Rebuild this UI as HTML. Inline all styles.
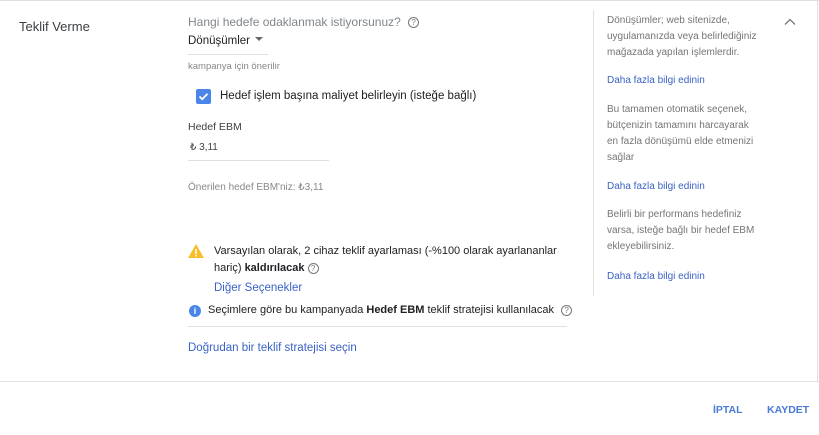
<!DOCTYPE html>
<html><head><meta charset="utf-8"><style>
body{margin:0;width:819px;height:435px;background:#fff;font-family:"Liberation Sans",Arial,sans-serif;position:relative;overflow:hidden;color:#202124}
.a{position:absolute;white-space:nowrap}
.g{color:#5f6368}
.l{color:#3b62c4}
.s{font-size:10px;color:#757575;line-height:16px}
.q{display:inline-block;width:9px;height:9px;border:1px solid #777;border-radius:50%;font-size:8px;line-height:9px;text-align:center;color:#777}
</style></head><body>
<div class="a" style="left:0;top:0;width:819px;height:1px;background:#e0e0e0"></div>
<div class="a" style="left:817px;top:0;width:1px;height:382px;background:#e0e0e0"></div>
<div class="a" style="left:19px;top:19px;font-size:13px;color:#3c4043">Teklif Verme</div>
<div class="a" style="left:188px;top:15px;font-size:12px;color:#80868b">Hangi hedefe odaklanmak istiyorsunuz? <span class="q" style="margin-left:4px;vertical-align:1px">?</span></div>
<div class="a" style="left:188px;top:35px;font-size:11.5px">Dönüşümler <span style="display:inline-block;border:4px solid transparent;border-top:4px solid #666;vertical-align:-1px;margin-left:2px"></span></div>
<div class="a" style="left:188px;top:54px;width:80px;height:1px;background:#e0e0e0"></div>
<div class="a" style="left:188px;top:61px;font-size:9.5px;color:#888">kampanya için önerilir</div>
<div class="a" style="left:196px;top:89px;width:15px;height:15px;background:#4a86e8;border-radius:2px"><svg width="15" height="15"><path d="M3.5 7.5l2.7 2.7 5.3-5.5" stroke="#fff" stroke-width="1.8" fill="none"/></svg></div>
<div class="a" style="left:220px;top:90px;font-size:11.5px">Hedef işlem başına maliyet belirleyin (isteğe bağlı)</div>
<div class="a" style="left:188px;top:121px;font-size:10.5px;color:#3c4043">Hedef EBM</div>
<div class="a" style="left:190px;top:142px;font-size:10px;color:#444">₺ 3,11</div>
<div class="a" style="left:188px;top:160px;width:141px;height:1px;background:#e0e0e0"></div>
<div class="a" style="left:188px;top:182px;font-size:10px;color:#888">Önerilen hedef EBM'niz: ₺3,11</div>
<svg class="a" style="left:187px;top:243px" width="18" height="16"><path d="M9 1L17 15H1z" fill="#f9bd2a"/><rect x="8.2" y="6" width="1.6" height="5" fill="#fff"/><rect x="8.2" y="12" width="1.6" height="1.6" fill="#fff"/></svg>
<div class="a" style="left:214px;top:243px;font-size:11px;line-height:17px">Varsayılan olarak, 2 cihaz teklif ayarlaması (-%100 olarak ayarlananlar<br>hariç) <b>kaldırılacak</b> <span class="q">?</span></div>
<div class="a l" style="left:214px;top:282px;font-size:11.5px">Diğer Seçenekler</div>
<div class="a" style="left:189px;top:305px;width:12px;height:12px;border-radius:50%;background:#4a86e8;color:#fff;font-size:9px;font-weight:bold;text-align:center;line-height:12px">i</div>
<div class="a" style="left:208px;top:304px;font-size:11px">Seçimlere göre bu kampanyada <b>Hedef EBM</b> teklif stratejisi kullanılacak <span class="q" style="margin-left:4px">?</span></div>
<div class="a" style="left:188px;top:326px;width:379px;height:1px;background:#e0e0e0"></div>
<div class="a l" style="left:188px;top:342px;font-size:11.5px">Doğrudan bir teklif stratejisi seçin</div>
<div class="a" style="left:593px;top:10px;width:1px;height:286px;background:#e0e0e0"></div>
<div class="a s" style="left:607px;top:13px">Dönüşümler; web sitenizde,<br>uygulamanızda veya belirlediğiniz<br>mağazada yapılan işlemlerdir.</div>
<div class="a l" style="left:607px;top:75px;font-size:10px">Daha fazla bilgi edinin</div>
<div class="a s" style="left:607px;top:102px">Bu tamamen otomatik seçenek,<br>bütçenizin tamamını harcayarak<br>en fazla dönüşümü elde etmenizi<br>sağlar</div>
<div class="a l" style="left:607px;top:181px;font-size:10px">Daha fazla bilgi edinin</div>
<div class="a s" style="left:607px;top:207px">Belirli bir performans hedefiniz<br>varsa, isteğe bağlı bir hedef EBM<br>ekleyebilirsiniz.</div>
<div class="a l" style="left:607px;top:271px;font-size:10px">Daha fazla bilgi edinin</div>
<svg class="a" style="left:784px;top:18px" width="12" height="8"><path d="M1 6.5l5-5 5 5" stroke="#777" stroke-width="1.3" fill="none"/></svg>
<div class="a" style="left:0;top:381px;width:819px;height:1px;background:#e0e0e0"></div>
<div class="a l" style="left:713px;top:404px;font-size:10.5px;font-weight:bold;color:#4a7bd8">İPTAL</div>
<div class="a l" style="left:767px;top:404px;font-size:10.5px;font-weight:bold;color:#4a7bd8">KAYDET</div>
</body></html>
